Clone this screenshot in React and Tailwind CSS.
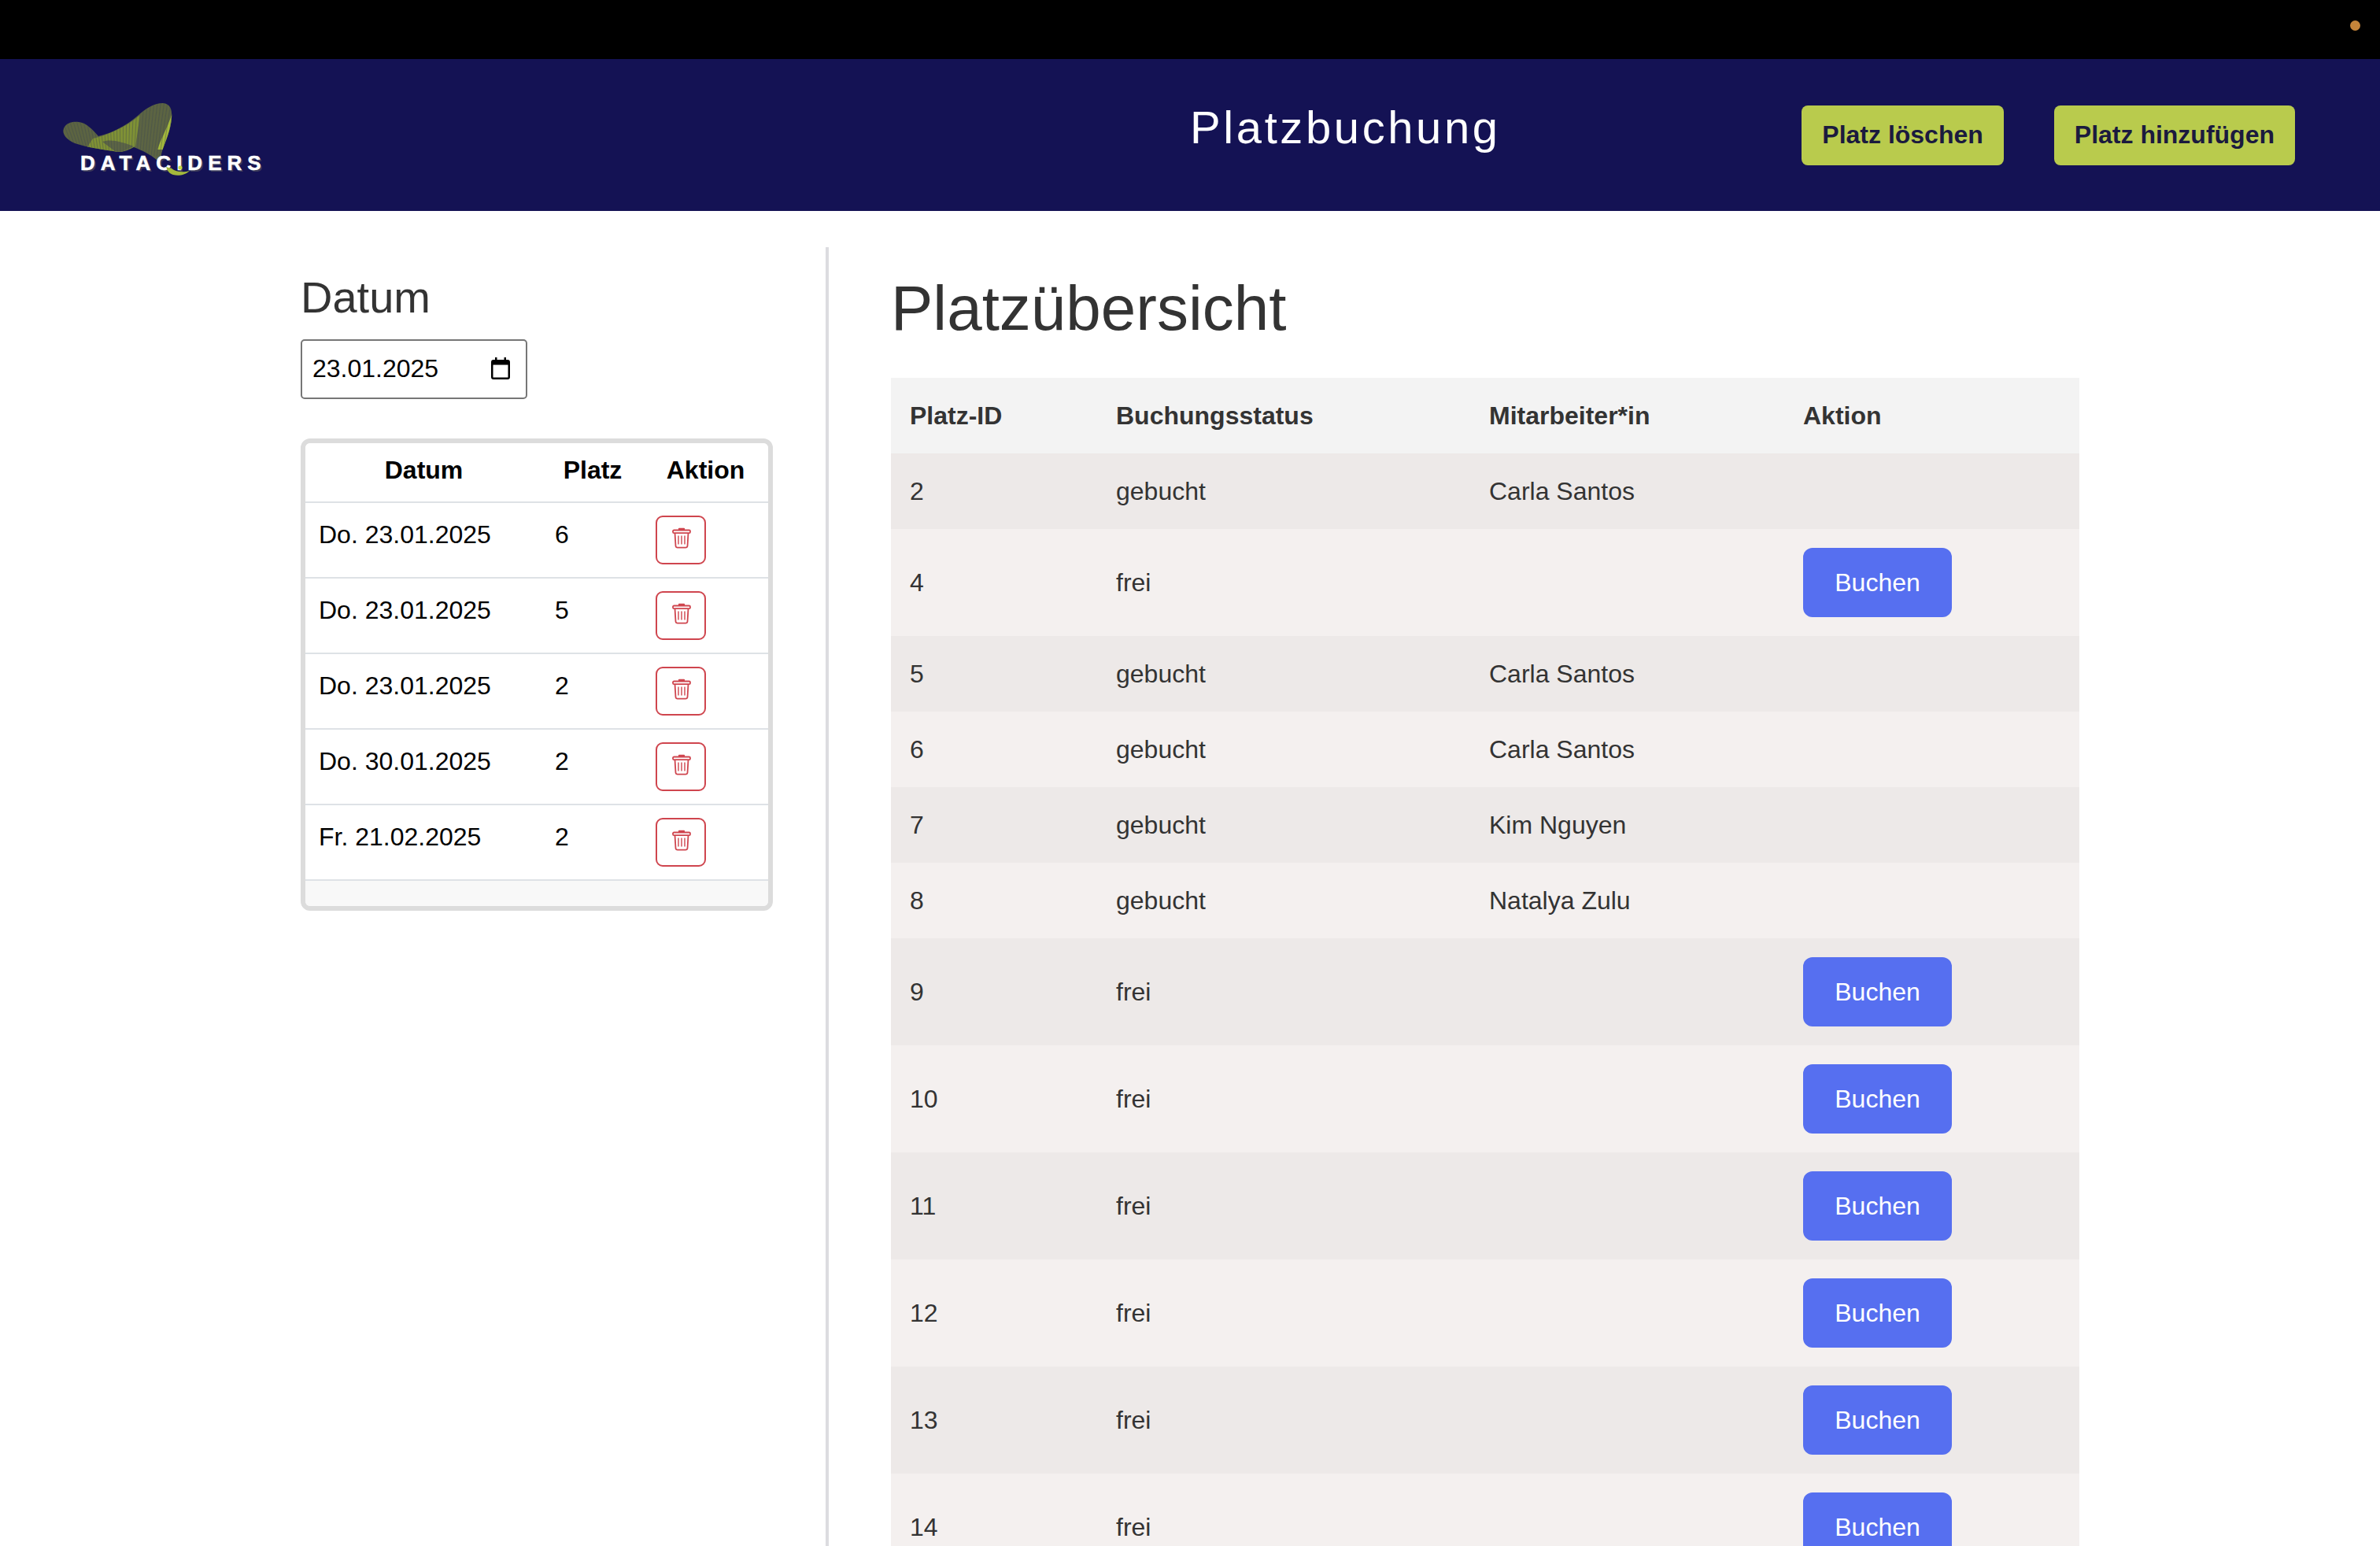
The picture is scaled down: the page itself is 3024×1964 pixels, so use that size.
import React from "react";

const bookings = [
  { date: "Do. 23.01.2025", seat: 6 },
  { date: "Do. 23.01.2025", seat: 5 },
  { date: "Do. 23.01.2025", seat: 2 },
  { date: "Do. 30.01.2025", seat: 2 },
  { date: "Fr. 21.02.2025", seat: 2 },
];

const seats = [
  { id: 2, status: "gebucht", name: "Carla Santos" },
  { id: 4, status: "frei" },
  { id: 5, status: "gebucht", name: "Carla Santos" },
  { id: 6, status: "gebucht", name: "Carla Santos" },
  { id: 7, status: "gebucht", name: "Kim Nguyen" },
  { id: 8, status: "gebucht", name: "Natalya Zulu" },
  { id: 9, status: "frei" },
  { id: 10, status: "frei" },
  { id: 11, status: "frei" },
  { id: 12, status: "frei" },
  { id: 13, status: "frei" },
  { id: 14, status: "frei" },
];

const ribbonOutline =
  "M81 163 C84 156 92 154 100 155 C110 156 118 165 125 173 C140 170 160 160 175 147 C185 138 195 131 207 131 C216 132 219 138 218 150 C217 165 210 180 206 192 C204 198 204 205 206 210 C195 197 180 191 170 187 C165 190 158 193 150 193 C130 190 110 187 95 182 C85 178 78 170 81 163 Z";

const meshLines = Array.from({ length: 34 }, (_, i) => {
  const t = i / 33;
  return {
    x1: 78 + t * 144,
    y1: 150 - t * 24,
    x2: 92 + t * 118,
    y2: 186 + t * 14,
  };
});

function Logo() {
  return (
    <div className="relative w-[280px] h-[120px] mt-[17px] shrink-0">
      <svg className="absolute inset-0" width="280" height="120" viewBox="70 120 280 120">
        <defs>
          <clipPath id="ribbon">
            <path d={ribbonOutline} />
          </clipPath>
        </defs>
        <path d={ribbonOutline} fill="#5c6445" />
        <g clipPath="url(#ribbon)">
          <path d="M118 176 C135 172 160 162 178 146 L172 186 L150 195 L110 188 Z" fill="#7f9136" />
          <path d="M130 180 C140 176 155 180 170 186 L150 195 Z" fill="#5c6445" />
          <path d="M200 190 C205 175 214 160 220 140 L222 190 Z" fill="#a3b83c" />
          {meshLines.map((l, i) => (
            <line key={i} {...l} stroke="#3f4a52" strokeWidth="0.7" opacity="0.6" />
          ))}
        </g>
      </svg>
      <span className="absolute left-[32px] top-[71px] text-[26px] leading-[32px] font-bold tracking-[7px] text-white [-webkit-text-stroke:0.5px_white] [text-shadow:2px_2px_0_#3a3a5a] whitespace-nowrap">
        DATACIDERS
      </span>
      <svg className="absolute inset-0" width="280" height="120" viewBox="70 120 280 120">
        <path d="M211 212 C213 218 216 221 220 222 C227 224 236 222 241 217 C234 219 224 219 218 214 Z" fill="#a3b83c" />
        <circle cx="229" cy="213" r="2.5" fill="#c5d93f" />
      </svg>
    </div>
  );
}

function TrashIcon() {
  return (
    <svg width="24" height="27" viewBox="0 0 24 27" fill="none" stroke="#cf454e" className="mb-[6px] ml-[1px]">
      <path d="M9 2 h6" strokeWidth="2.4" strokeLinecap="round" />
      <rect x="1" y="3.5" width="22" height="3.6" rx="1.4" strokeWidth="1.8" />
      <path d="M3.5 7 L4.5 23.5 Q4.7 25.6 7 25.6 H17 Q19.3 25.6 19.5 23.5 L20.5 7" strokeWidth="1.8" />
      <path d="M8 10.5 V21.5 M12 10.5 V21.5 M16 10.5 V21.5" strokeWidth="1.4" />
    </svg>
  );
}

function CalendarIcon() {
  return (
    <svg width="24" height="28" viewBox="0 0 24 28" className="shrink-0">
      <path d="M5 0 h2.5 v3 h9 v-3 h2.5 v3 h2 q3 0 3 3 v19 q0 3 -3 3 h-18 q-3 0 -3 -3 v-19 q0 -3 3 -3 h2 z M2.5 9.5 v15.5 q0 .5 .5 .5 h18 q.5 0 .5 -.5 v-15.5 z" fill="#000" fillRule="evenodd" />
    </svg>
  );
}

function BookingCard() {
  return (
    <div className="w-[600px] border-[6px] border-[#dcdcdc] rounded-[12px] overflow-hidden bg-[#f8f8f8]">
      <table className="w-[588px] table-fixed bg-white text-[32px] text-black">
        <colgroup>
          <col className="w-[301px]" />
          <col className="w-[128px]" />
          <col className="w-[159px]" />
        </colgroup>
        <thead>
          <tr className="border-b-2 border-[#dee2e6]">
            <th className="pt-4 pb-[21px] leading-[37px] font-bold text-center">Datum</th>
            <th className="pt-4 pb-[21px] leading-[37px] font-bold text-center">Platz</th>
            <th className="pt-4 pb-[21px] leading-[37px] font-bold text-center">Aktion</th>
          </tr>
        </thead>
        <tbody>
          {bookings.map((b, i) => (
            <tr key={i} className="border-b-2 border-[#dee2e6]">
              <td className="py-4 pl-[17px] pr-4 align-top leading-[48px]">{b.date}</td>
              <td className="p-4 align-top leading-[48px]">{b.seat}</td>
              <td className="p-4 align-top">
                <button className="flex items-center justify-center w-[64px] h-[62px] border-2 border-[#cf454e] rounded-[9px] bg-white">
                  <TrashIcon />
                </button>
              </td>
            </tr>
          ))}
        </tbody>
      </table>
      <div className="h-[32px] bg-[#f8f8f8]"></div>
    </div>
  );
}

function SeatTable() {
  return (
    <table className="w-[1510px] table-fixed text-[32px] leading-[48px] text-[#333333]">
      <colgroup>
        <col className="w-[262px]" />
        <col className="w-[474px]" />
        <col className="w-[399px]" />
        <col className="w-[375px]" />
      </colgroup>
      <thead>
        <tr className="bg-[#f3f3f3]">
          <th className="p-6 font-bold text-left">Platz-ID</th>
          <th className="p-6 font-bold text-left">Buchungsstatus</th>
          <th className="p-6 font-bold text-left">Mitarbeiter*in</th>
          <th className="p-6 font-bold text-left">Aktion</th>
        </tr>
      </thead>
      <tbody>
        {seats.map((s, i) => (
          <tr key={s.id} className={i % 2 === 0 ? "bg-[#ede9e8]" : "bg-[#f4f0ef]"}>
            <td className="p-6">{s.id}</td>
            <td className="p-6">{s.status}</td>
            <td className="p-6">{s.name}</td>
            <td className="p-6">
              {s.status === "frei" && (
                <button className="block w-[189px] h-[88px] bg-[#566ff0] text-white rounded-[12px]">Buchen</button>
              )}
            </td>
          </tr>
        ))}
      </tbody>
    </table>
  );
}

export default function App() {
  return (
    <div className="h-[1964px] overflow-hidden bg-white font-['Liberation_Sans',Arial,sans-serif]">
      <div className="h-[75px] bg-black flex justify-end pt-[26px] pr-[25px]">
        <div className="w-[13px] h-[13px] rounded-full bg-[#c4843a]"></div>
      </div>

      <header className="h-[193px] bg-[#141254] flex items-center pl-[70px] pr-[108px]">
        <Logo />
        <h1 className="ml-[1162px] mb-[20px] text-[58px] leading-[64px] tracking-[3.6px] text-white whitespace-nowrap">
          Platzbuchung
        </h1>
        <div className="ml-auto flex gap-16">
          <button className="h-[76px] px-[26px] pb-[2px] rounded-[8px] bg-[#b9cb4d] text-[32px] font-bold text-[#1b1a3e]">Platz löschen</button>
          <button className="h-[76px] px-[26px] pb-[2px] rounded-[8px] bg-[#b9cb4d] text-[32px] font-bold text-[#1b1a3e]">Platz hinzufügen</button>
        </div>
      </header>

      <main className="flex">
        <section className="w-[1053px] mt-[46px] h-[1650px] pl-[382px] pt-[32px] border-r-4 border-[#dcdce0]">
          <h2 className="text-[56px] leading-[64px] text-[#333333] mb-[21px]">Datum</h2>
          <div className="w-[288px] h-[76px] flex items-center justify-between pl-[13px] pr-[20px] pb-[3px] border-2 border-[#767676] rounded-[5px] text-[32px] text-black mb-[50px]">
            <span>23.01.2025</span>
            <CalendarIcon />
          </div>
          <BookingCard />
        </section>

        <section className="pl-[79px] pt-[80px]">
          <h2 className="text-[80px] leading-[88px] text-[#333333] mb-[44px]">Platzübersicht</h2>
          <SeatTable />
        </section>
      </main>
    </div>
  );
}
